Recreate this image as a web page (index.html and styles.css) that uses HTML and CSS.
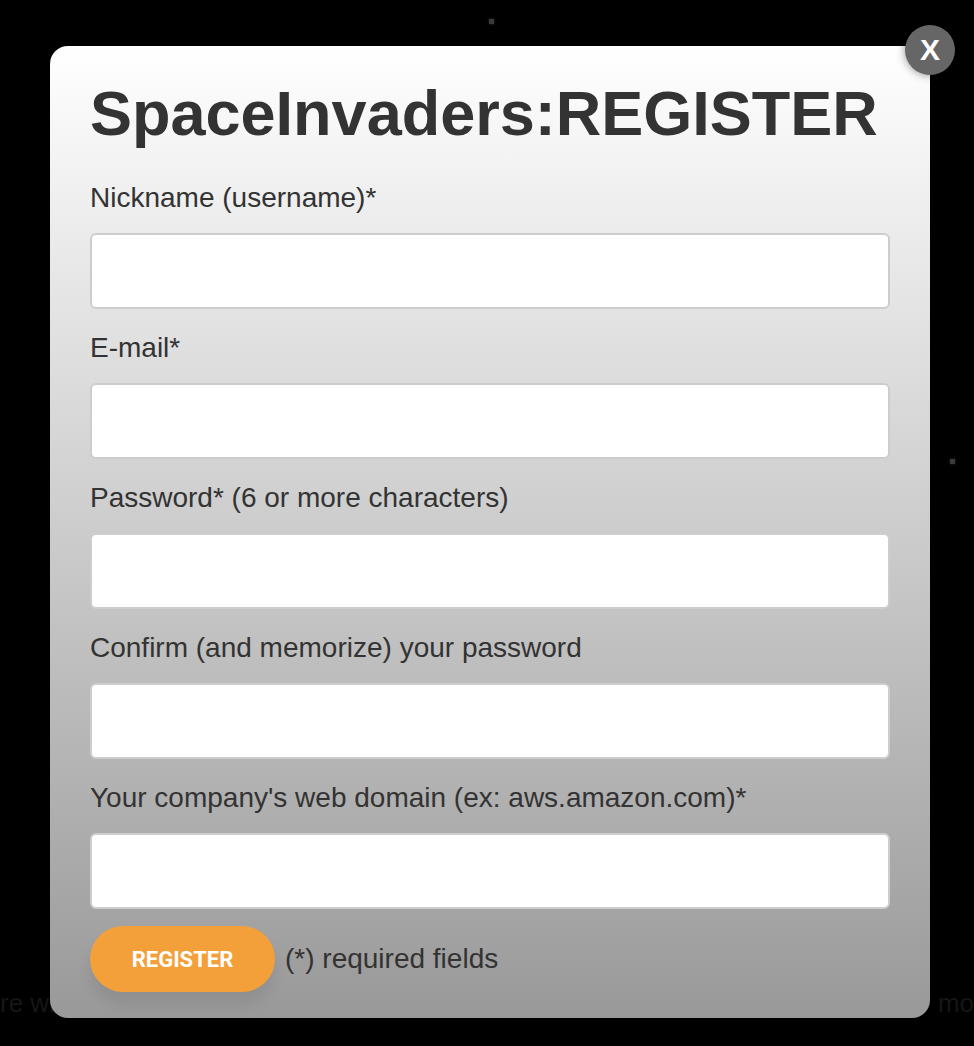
FILE: index.html
```html
<!DOCTYPE html>
<html lang="en">
<head>
<meta charset="utf-8">
<title>SpaceInvaders: Register</title>
<link rel="stylesheet" href="styles.css">
</head>
<body>
<div class="page">
  <span class="star star-a"></span>
  <span class="star star-b"></span>
  <div class="behind-line">
    <span>re wi</span>
    <span>mo</span>
  </div>
</div>

<div class="modal">
  <button class="close" type="button">X</button>
  <h1 class="title">SpaceInvaders:REGISTER</h1>
  <form class="form">
    <div class="field">
      <label class="label" for="nick">Nickname (username)*</label>
      <input class="input" id="nick" type="text">
    </div>
    <div class="field">
      <label class="label" for="email">E-mail*</label>
      <input class="input" id="email" type="email">
    </div>
    <div class="field">
      <label class="label" for="pw">Password* (6 or more characters)</label>
      <input class="input" id="pw" type="password">
    </div>
    <div class="field">
      <label class="label" for="pw2">Confirm (and memorize) your password</label>
      <input class="input" id="pw2" type="password">
    </div>
    <div class="field">
      <label class="label" for="domain">Your company's web domain (ex: aws.amazon.com)*</label>
      <input class="input" id="domain" type="text">
    </div>
    <div class="actions">
      <button class="register" type="button">REGISTER</button>
      <span class="note">(*) required fields</span>
    </div>
  </form>
</div>
</body>
</html>
```

FILE: styles.css
```css
html, body {
  margin: 0;
  padding: 0;
  background: #000;
}

body {
  width: 974px;
  height: 1046px;
  overflow: hidden;
  position: relative;
  font-family: "Liberation Sans", Arial, sans-serif;
}

.page {
  height: 1046px;
  display: flex;
  flex-direction: column;
  justify-content: flex-end;
  box-sizing: border-box;
  padding-bottom: 28px;
}

.star {
  position: absolute;
  width: 5px;
  height: 5px;
  background: #3a3a3a;
  box-shadow: 0 0 3px #2a2a2a;
}

.star-a { left: 489px; top: 19px; }
.star-b { left: 950px; top: 459px; }

.behind-line {
  display: flex;
  justify-content: space-between;
  font-size: 26px;
  line-height: 30px;
  color: #161616;
  padding-left: 0;
  white-space: nowrap;
}

.modal {
  position: absolute;
  left: 50px;
  top: 46px;
  width: 880px;
  height: 972px;
  box-sizing: border-box;
  padding: 31px 40px 26px;
  border-radius: 18px;
  background: linear-gradient(to bottom, #ffffff 0%, #999999 100%);
}

.close {
  position: absolute;
  right: -25px;
  top: -21px;
  width: 50px;
  height: 50px;
  border: none;
  border-radius: 50%;
  background: #666;
  color: #fff;
  font-family: "Liberation Sans", Arial, sans-serif;
  font-weight: 700;
  font-size: 30px;
  line-height: 50px;
  padding: 0;
  text-align: center;
  box-shadow: 0 0 10px rgba(0, 0, 0, 0.45);
}

.title {
  margin: 0;
  font-size: 63px;
  line-height: 72px;
  font-weight: 700;
  color: #333;
}

.form {
  margin-top: 33px;
  display: flex;
  flex-direction: column;
}

.field {
  display: flex;
  flex-direction: column;
  gap: 19px;
}

.field + .field {
  margin-top: 23px;
}

.label {
  font-size: 28px;
  line-height: 32px;
  color: #333;
}

.input {
  height: 76px;
  box-sizing: border-box;
  border: 2px solid #cdcdcd;
  border-radius: 6px;
  background: #fff;
  margin: 0;
  padding: 0 14px;
  font-size: 24px;
}

.actions {
  margin-top: 17px;
  display: flex;
  align-items: center;
  gap: 10px;
}

.register {
  width: 185px;
  height: 66px;
  border: none;
  border-radius: 33px;
  background: #f4a03a;
  color: #fff;
  font-family: Roboto, "Liberation Sans", sans-serif;
  font-weight: 700;
  font-size: 22px;
  padding: 0;
  box-shadow: 0 12px 14px rgba(0, 0, 0, 0.08);
}

.note {
  font-size: 28px;
  line-height: 32px;
  color: #333;
}
```
